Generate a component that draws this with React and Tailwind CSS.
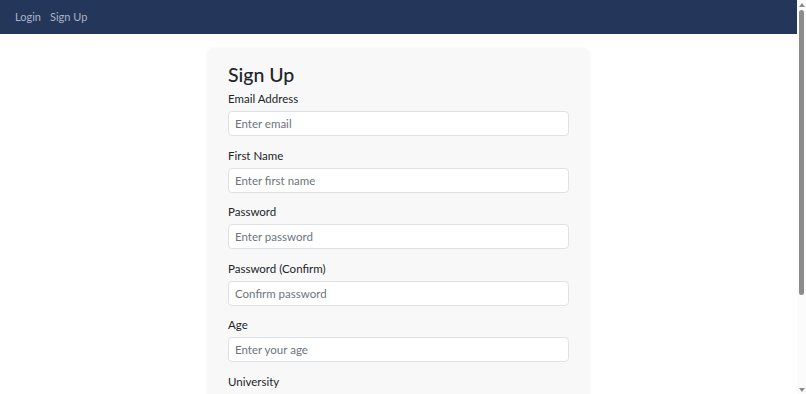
import React from 'react';

export default function App() {
  const fields = [
    { label: 'Email Address', placeholder: 'Enter email', type: 'email' },
    { label: 'First Name', placeholder: 'Enter first name', type: 'text' },
    { label: 'Password', placeholder: 'Enter password', type: 'password' },
    { label: 'Password (Confirm)', placeholder: 'Confirm password', type: 'password' },
    { label: 'Age', placeholder: 'Enter your age', type: 'number' },
    { label: 'University', placeholder: 'Enter your university', type: 'text' },
    { label: 'Major', placeholder: 'Enter your major', type: 'text' }
  ];

  return (
    <div className="flex h-screen overflow-hidden bg-white text-[#212529] font-['Lato',sans-serif]">
      {/* Page */}
      <div className="flex-1 h-screen overflow-hidden">
        {/* Navbar */}
        <nav className="h-[34px] bg-[#243659] flex items-center px-[15px] gap-[9px] text-[11px]">
          <a className="text-[#aab4c6]">Login</a>
          <a className="text-[#aab4c6]">Sign Up</a>
        </nav>

        {/* Form card */}
        <div className="pt-[14px] pb-8">
          <div className="mx-auto w-[381px] bg-[#f8f8f8] rounded-md shadow-[0_1px_4px_rgba(0,0,0,0.06)] px-[20px] pt-[15px] pb-5">
            <h1 className="text-[19.5px] font-medium leading-[24px] mb-[3px]">Sign Up</h1>
            {fields.map((f) => (
              <div key={f.label} className="mb-[10.5px]">
                <label className="block text-[11.5px] leading-[17px] mb-[3px]">{f.label}</label>
                <input
                  type={f.type}
                  placeholder={f.placeholder}
                  className="w-full h-[25px] bg-white border border-[#dee2e6] rounded-[4px] px-[6px] text-[11.5px] placeholder:text-[#6c757d] outline-none"
                />
              </div>
            ))}
            <button className="mt-2 bg-[#0d6efd] text-white text-[11px] rounded px-3 py-1">Sign Up</button>
          </div>
        </div>
      </div>

      {/* Scrollbar */}
      <div className="w-[9px] h-screen bg-[#fbfbfb] flex flex-col items-center">
        <div className="mt-[3px] w-0 h-0 border-l-[3px] border-r-[3px] border-b-[4px] border-l-transparent border-r-transparent border-b-[#8a8a8a]" />
        <div className="mt-[3px] w-[5px] h-[285px] rounded-full bg-[#8c8c8c]" />
        <div className="flex-1" />
        <div className="mb-[2px] w-0 h-0 border-l-[3px] border-r-[3px] border-t-[4px] border-l-transparent border-r-transparent border-t-[#8a8a8a]" />
      </div>
    </div>
  );
}
